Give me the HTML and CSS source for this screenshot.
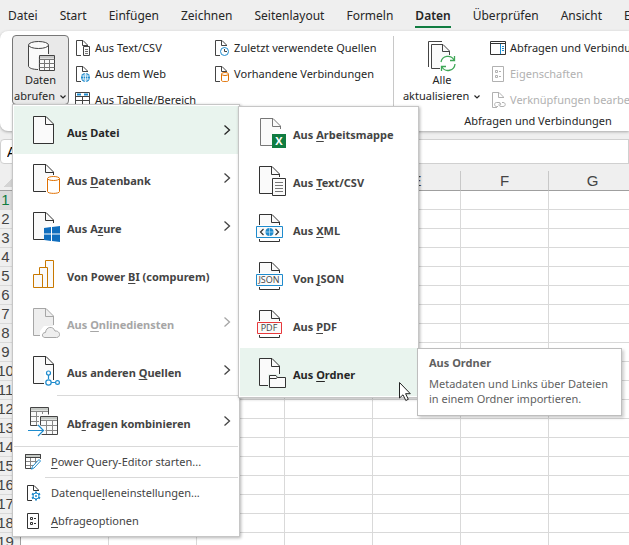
FILE: index.html
```
<!DOCTYPE html>
<html lang="de">
<head>
    <meta charset="UTF-8">
    <meta name="viewport" content="width=device-width, initial-scale=1.0">
    <title>Daten abrufen</title>
    <link rel="stylesheet" href="styles.css">
</head>
<body>
    <!-- shared icon parts -->
    <svg class="defs" aria-hidden="true">
        <symbol id="doc" viewBox="0 0 32 32">
            <path d="M5.5 2.500H18L26 10.500V29.500H5.500Z" fill="#fafafa" stroke="none"/>
            <path d="M25.500 29.500H5.500V2.500H18L25.500 10V29.500M17.500 2.500V10.500H25.500" fill="none" stroke="currentColor"/>
        </symbol>
        <symbol id="doc-cut" viewBox="0 0 32 32">
            <path d="M5.500 2.500H18L25.500 10V14H18V29.500H5.500Z" fill="#fafafa"/>
            <path d="M18 29.500H5.500V2.500H18L25.500 10V13M17.500 2.500V10.500H25.500" fill="none" stroke="currentColor"/>
        </symbol>
        <symbol id="doc-split" viewBox="0 0 32 32">
            <path d="M5.500 13V2.500H18L25.500 10V13Z" fill="#fafafa"/>
            <path d="M5.500 13V2.500H18L25.500 10V13M17.500 2.500V10.500H25.500M5.500 27V29.500H25.500V27" fill="none" stroke="currentColor"/>
        </symbol>
        <symbol id="doc-small" viewBox="0 0 16 16">
            <path d="M6 15.500H1.500V.5H8L12.500 5V6M7.500 .5V5.500H12.500" fill="none" stroke="currentColor"/>
        </symbol>
        <symbol id="props" viewBox="0 0 16 16">
            <path d="M2.500 .5H13.500V15.500H2.500Z" fill="none" stroke="currentColor"/>
            <path d="M5.500 4.500H7.500V6.500H5.500ZM5.500 9.500H7.500V11.500H5.500ZM9 5.500H11M9 10.500H11" fill="none" stroke="currentColor"/>
        </symbol>
        <symbol id="right" viewBox="0 0 8 10">
            <path d="M1.500 .5L6.500 5L1.500 9.500" fill="none" stroke="currentColor" stroke-width="1.300"/>
        </symbol>
        <symbol id="down" viewBox="0 0 8 6">
            <path d="M1.500 1.500L4 4L6.500 1.500" fill="none" stroke="currentColor" stroke-width="1.200"/>
        </symbol>
    </svg>

    <nav class="tabs">
        <a href="#">Datei</a>
        <a href="#">Start</a>
        <a href="#">Einfügen</a>
        <a href="#">Zeichnen</a>
        <a href="#">Seitenlayout</a>
        <a href="#">Formeln</a>
        <a href="#" class="active">Daten</a>
        <a href="#">Überprüfen</a>
        <a href="#">Ansicht</a>
        <a href="#">Entwicklertools</a>
    </nav>

    <div class="ribbon">
        <section class="group import">
            <div class="tools">
                <div class="dropdown">
                    <button class="big open">
                        <svg width="30" height="32" viewBox="0 0 30 32" fill="none" stroke="#444">
                            <path d="M2.500 5V26C2.500 28 7 29.500 12 29.500V17H22.500V5" fill="#fafafa" stroke="none"/>
                            <path d="M12 29.500C7 29.500 2.500 28 2.500 26V5M22.500 5V14"/>
                            <ellipse cx="12.500" cy="5" rx="10" ry="3.500" fill="#fafafa"/>
                            <path d="M13.500 15.500H28.500V30.500H13.500Z" fill="#fafafa"/>
                            <path d="M14 16H28V18.500H14Z" fill="#c8c8c8" stroke="none"/>
                            <path d="M13.500 19.500H28.500M13.500 23.500H28.500M13.500 27.500H28.500M18.500 19V30M23.500 19V30" stroke="#777"/>
                        </svg>
                        <span>Daten</span>
                        <span>abrufen <svg class="caret"><use href="#down"/></svg></span>
                    </button>

                    <ul class="menu main-menu">
                        <li>
                            <button class="item selected">
                                <svg class="icon"><use href="#doc"/></svg>
                                <span>Au<u>s</u> Datei</span>
                                <svg class="arrow"><use href="#right"/></svg>
                            </button>
                            <ul class="menu sub-menu">
                                <li><button class="item">
                                    <svg class="icon" viewBox="0 0 32 32">
                                        <g color="#777"><use href="#doc-cut" x="1" width="32" height="32"/></g>
                                        <path d="M18 18H32V32H18Z" fill="#107c41"/>
                                        <text x="25" y="29" class="icon-text excel">X</text>
                                    </svg>
                                    <span>Aus <u>A</u>rbeitsmappe</span>
                                </button></li>
                                <li><button class="item">
                                    <svg class="icon" viewBox="0 0 32 32">
                                        <use href="#doc-cut" width="32" height="32"/>
                                        <path d="M18.500 14.500H31.500V31.500H18.500Z" fill="#fafafa" stroke="#333"/>
                                        <path d="M21 18.500H29M21 21.500H29M21 24.500H29M21 27.500H29" stroke="#777"/>
                                    </svg>
                                    <span>Aus <u>T</u>ext/CSV</span>
                                </button></li>
                                <li><button class="item">
                                    <svg class="icon" viewBox="0 0 32 32">
                                        <use href="#doc-split" width="32" height="32"/>
                                        <path d="M2.500 14.500H28.500V25.500H2.500Z" fill="#fafafa" stroke="#1e8bcd"/>
                                        <circle cx="15.500" cy="20" r="4" fill="#1e8bcd"/>
                                        <path d="M11.500 20H19.500M15.500 16V24" stroke="#bfe0f5" stroke-width=".7"/>
                                        <path d="M9.500 17L6.500 20L9.500 23M21.500 17L24.500 20L21.500 23" fill="none" stroke="#333" stroke-width="1.200"/>
                                    </svg>
                                    <span>Aus <u>X</u>ML</span>
                                </button></li>
                                <li><button class="item">
                                    <svg class="icon" viewBox="0 0 32 32">
                                        <use href="#doc-split" width="32" height="32"/>
                                        <path d="M2.500 14.500H28.500V25.500H2.500Z" fill="#fafafa" stroke="#1e8bcd"/>
                                        <text x="15" y="23" class="icon-text">JSON</text>
                                    </svg>
                                    <span>Von <u>J</u>SON</span>
                                </button></li>
                                <li><button class="item">
                                    <svg class="icon" viewBox="0 0 32 32">
                                        <use href="#doc-split" width="32" height="32"/>
                                        <path d="M3.500 14.500H27.500V25.500H3.500Z" fill="#fafafa" stroke="#e8383b"/>
                                        <text x="15" y="23" class="icon-text">PDF</text>
                                    </svg>
                                    <span>Aus <u>P</u>DF</span>
                                </button></li>
                                <li>
                                    <button class="item selected" aria-describedby="tip">
                                        <svg class="icon" viewBox="0 0 32 32">
                                            <use href="#doc" width="32" height="32"/>
                                            <path d="M14 18H32V32H14Z" fill="#e9f4ee"/>
                                            <path d="M15.500 31.500V19.500H22L23.500 21.500H31.500V31.500ZM15.500 22.500H22L23.500 21.500" fill="#fafafa" stroke="#333"/>
                                        </svg>
                                        <span>Aus <u>O</u>rdner</span>
                                    </button>
                                    <div class="tooltip" id="tip" role="tooltip">
                                        <strong>Aus Ordner</strong>
                                        <p>Metadaten und Links über Dateien<br>in einem Ordner importieren.</p>
                                    </div>
                                    <svg class="pointer" width="14" height="21" viewBox="0 0 14 21">
                                        <path d="M1.500 1.500V17L5 13.800L7.800 19.500L10.300 18.300L7.600 12.700H12.300Z" fill="#fff" stroke="#222"/>
                                    </svg>
                                </li>
                            </ul>
                        </li>
                        <li><button class="item">
                            <svg class="icon" viewBox="0 0 32 32">
                                <use href="#doc-cut" width="32" height="32"/>
                                <path d="M19.500 16.500V29.500C19.500 32 31.500 32 31.500 29.500V16.500" fill="#fff" stroke="#e07000"/>
                                <ellipse cx="25.500" cy="16.500" rx="6" ry="2" fill="#fff" stroke="#e07000"/>
                            </svg>
                            <span>Aus <u>D</u>atenbank</span>
                            <svg class="arrow"><use href="#right"/></svg>
                        </button></li>
                        <li><button class="item">
                            <svg class="icon" viewBox="0 0 32 32">
                                <use href="#doc-cut" width="32" height="32"/>
                                <path d="M16 18L23 17V23.500H16ZM24 17L32 16V23.500H24ZM16 24.500H23V31L16 30ZM24 24.500H32V32L24 31Z" fill="#106ebe"/>
                            </svg>
                            <span>Aus A<u>z</u>ure</span>
                            <svg class="arrow"><use href="#right"/></svg>
                        </button></li>
                        <li><button class="item">
                            <svg class="icon" viewBox="0 0 32 32" fill="#fafafa" stroke="#c87800">
                                <path d="M17.500 2.500H25.500V29.500H17.500Z"/>
                                <path d="M11.500 9.500H19.500V29.500H11.500Z"/>
                                <path d="M5.500 16.500H14.500V29.500H5.500Z"/>
                            </svg>
                            <span>Von Power <u>B</u>I (compurem)</span>
                        </button></li>
                        <li><button class="item" disabled>
                            <svg class="icon" viewBox="0 0 32 32">
                                <path d="M5.500 2.500H18L25.500 10V29.500H5.500Z" fill="#eee"/>
                                <path d="M14 29.500H5.500V2.500H18L25.500 10V19M17.500 2.500V10.500H25.500" fill="none" stroke="#a6a6a6"/>
                                <path d="M12 32V25L16 20H32V32Z" fill="#fff"/>
                                <path d="M17 31.500C13.500 31.500 13.500 26.500 17.500 26.500C18 20.500 25 19.500 27 25C32.500 24.500 33 31.500 28.500 31.500Z" fill="#eee" stroke="#a6a6a6"/>
                            </svg>
                            <span>Aus <u>O</u>nlinediensten</span>
                            <svg class="arrow"><use href="#right"/></svg>
                        </button></li>
                        <li><button class="item">
                            <svg class="icon" viewBox="0 0 32 32">
                                <use href="#doc" width="32" height="32"/>
                                <path d="M17 16H25V18H32V32H16V18Z" fill="#fff"/>
                                <path d="M25.500 10V26" stroke="#333"/>
                                <g fill="#fff" stroke="#1e8bcd" stroke-width="1.200">
                                    <path d="M20.500 21V25M23 28.500H27"/>
                                    <circle cx="20.500" cy="19" r="2"/>
                                    <circle cx="20.500" cy="28.500" r="2.700"/>
                                    <circle cx="29.500" cy="28.500" r="1.900"/>
                                </g>
                            </svg>
                            <span>Aus anderen <u>Q</u>uellen</span>
                            <svg class="arrow"><use href="#right"/></svg>
                        </button></li>
                        <li class="line indent-big"></li>
                        <li><button class="item">
                            <svg class="icon" viewBox="0 0 32 32" fill="none" stroke="#444">
                                <path d="M2.500 2.500H20.500V20.500H2.500Z" fill="#fafafa" stroke="none"/>
                                <path d="M3 3H20V5.500H3Z" fill="#c5c9c5" stroke="none"/>
                                <path d="M2.500 6.500H20.500M2.500 11.500H11M2.500 16.500H11M8.500 6V20M14.500 6V9" stroke="#888"/>
                                <path d="M11 20.500H2.500V2.500H20.500V9.500"/>
                                <path d="M12.500 11.500H29.500V29.500H12.500Z" fill="#fafafa"/>
                                <path d="M13 12H29V14.500H13Z" fill="#c5c9c5" stroke="none"/>
                                <path d="M13 15.500H29M13 20.500H29M13 25.500H29M18.500 15V29M24.500 15V29" stroke="#888"/>
                                <path d="M0 25.500H15M10 20L15.500 25.500L10 31" stroke="#fff" stroke-width="3"/>
                                <path d="M0 25.500H15M10 20L15.500 25.500L10 31" stroke="#1e8bcd" stroke-width="1.200"/>
                            </svg>
                            <span>Ab<u>f</u>ragen kombinieren</span>
                            <svg class="arrow"><use href="#right"/></svg>
                        </button></li>
                        <li class="line"></li>
                        <li><button class="item small">
                            <svg class="icon" viewBox="0 0 16 16" fill="none" stroke="#444">
                                <path d="M.5 .5H15.500V3.500H.5Z" fill="#c5c9c5"/>
                                <path d="M1 7.500H12M1 11.500H8M5.500 4V14M10.500 4V9" stroke="#888"/>
                                <path d="M7 14.500H.5V.5H15.500V5"/>
                                <path d="M14 5.500L15.500 7L9 14L6.500 15.200L7.500 12.500Z" fill="#fff" stroke="#1e8bcd"/>
                            </svg>
                            <span><u>P</u>ower Query-Editor starten...</span>
                        </button></li>
                        <li class="line indent-small"></li>
                        <li><button class="item small">
                            <svg class="icon" viewBox="0 0 16 16">
                                <use href="#doc-small" x="1" width="16" height="16"/>
                                <path d="M11 6.500V15.500M7 8.700L15 13.300M15 8.700L7 13.300" stroke="#1e8bcd" stroke-width="2"/>
                                <circle cx="11" cy="11" r="3" fill="#fff" stroke="#1e8bcd"/>
                                <circle cx="11" cy="11" r="1" fill="#1e8bcd"/>
                            </svg>
                            <span>Datenque<u>l</u>leneinstellungen...</span>
                        </button></li>
                        <li><button class="item small">
                            <svg class="icon"><use href="#props"/></svg>
                            <span><u>A</u>bfrageoptionen</span>
                        </button></li>
                    </ul>
                </div>

                <div class="stack">
                    <button class="tool">
                        <svg class="small-icon" viewBox="0 0 16 16">
                            <use href="#doc-small" width="16" height="16"/>
                            <path d="M8.500 6.500H14.500V15.500H8.500Z" fill="#fafafa" stroke="#444"/>
                            <path d="M10 9.500H13M10 11.500H13M10 13.500H13" stroke="#777"/>
                        </svg>
                        Aus Text/CSV
                    </button>
                    <button class="tool">
                        <svg class="small-icon" viewBox="0 0 16 16">
                            <use href="#doc-small" width="16" height="16"/>
                            <circle cx="10.500" cy="11.500" r="4.500" fill="#1e8bcd"/>
                            <path d="M6.500 10H14.500M6.500 13H14.500M10.500 7V16" stroke="#fff" stroke-width=".8"/>
                            <ellipse cx="10.500" cy="11.500" rx="2" ry="4" fill="none" stroke="#fff" stroke-width=".7"/>
                        </svg>
                        Aus dem Web
                    </button>
                    <button class="tool">
                        <svg class="small-icon" viewBox="0 0 16 16" fill="none" stroke="#444">
                            <path d="M.5 .5H14.500V15.500H.5ZM.5 4.500H14.500M.5 8.500H14.500M.5 12.500H14.500M7.500 4V15"/>
                            <path d="M2 2.500H6M9 2.500H13" stroke="#1e8bcd" stroke-width="2"/>
                        </svg>
                        Aus Tabelle/Bereich
                    </button>
                </div>

                <div class="stack">
                    <button class="tool">
                        <svg class="small-icon" viewBox="0 0 16 16">
                            <use href="#doc-small" width="16" height="16"/>
                            <circle cx="10.500" cy="11.500" r="4" fill="#fff" stroke="#1e8bcd"/>
                            <path d="M10.500 9V11.500H13" fill="none" stroke="#444"/>
                        </svg>
                        Zuletzt verwendete Quellen
                    </button>
                    <button class="tool">
                        <svg class="small-icon" viewBox="0 0 16 16">
                            <use href="#doc-small" width="16" height="16"/>
                            <path d="M7.500 8V14.500C7.500 16 14.500 16 14.500 14.500V8" fill="#fff" stroke="#e07000"/>
                            <ellipse cx="11" cy="8" rx="3.500" ry="1.500" fill="#fff" stroke="#e07000"/>
                        </svg>
                        Vorhandene Verbindungen
                    </button>
                </div>
            </div>
        </section>

        <section class="group queries">
            <div class="tools">
                <button class="big">
                    <svg width="30" height="32" viewBox="0 0 30 32" fill="none" stroke="#444">
                        <path d="M1.500 27V1.500H15"/>
                        <path d="M13 28.500H4.500V4.500H16L22.500 11V17H13Z" fill="#fafafa" stroke="none"/>
                        <path d="M13 28.500H4.500V4.500H16L22.500 11V15M15.500 4.500V11.500H22.500"/>
                        <path d="M14 22A7 7 0 0 1 27 20M28 24A7 7 0 0 1 15 27" stroke="#3fa757" stroke-width="1.300"/>
                        <path d="M27.500 16V20.500H23M14.500 31V26.500H19" stroke="#3fa757" stroke-width="1.300"/>
                    </svg>
                    <span>Alle</span>
                    <span>aktualisieren <svg class="caret"><use href="#down"/></svg></span>
                </button>
                <div class="stack">
                    <button class="tool">
                        <svg class="small-icon" viewBox="0 0 16 16" fill="none" stroke="#333">
                            <path d="M.5 1.500H15.500V14.500H.5ZM.5 3.500H15.500"/>
                            <path d="M10.500 4V14M12 6.500H14M12 8.500H14M12 10.500H14" stroke="#1e8bcd"/>
                        </svg>
                        Abfragen und Verbindungen
                    </button>
                    <button class="tool" disabled>
                        <svg class="small-icon"><use href="#props"/></svg>
                        Eigenschaften
                    </button>
                    <button class="tool" disabled>
                        <svg class="small-icon" viewBox="0 0 16 16">
                            <use href="#doc-small" x="1" width="16" height="16"/>
                            <path d="M8 14.500H6.500C4 14.500 4 10.500 6.500 10.500H9C11 10.500 11 13 10 13.500M12 10.500H13C16 10.500 16 14.500 13 14.500H11C9 14.500 8.500 12.500 9.500 11.500" fill="none" stroke="currentColor"/>
                        </svg>
                        Verknüpfungen bearbeiten
                    </button>
                </div>
            </div>
            <div class="group-name">Abfragen und Verbindungen</div>
        </section>
    </div>

    <div class="formula-bar">
        <input class="name-box" type="text" value="A1" aria-label="Namenfeld">
        <input class="formula" type="text" aria-label="Bearbeitungsleiste">
    </div>

    <table class="sheet">
        <thead>
            <tr><th class="corner"></th><th>A</th><th>B</th><th>C</th><th>D</th><th>E</th><th>F</th><th>G</th></tr>
        </thead>
        <tbody id="rows"></tbody>
    </table>

    <script>
        const rows = document.getElementById("rows");
        for (let i = 1; i <= 19; i++) {
            const tr = rows.insertRow();
            tr.innerHTML = "<th>" + i + "</th>" + "<td></td>".repeat(7);
            if (i === 1) tr.className = "current";
        }
    </script>
</body>
</html>
```
FILE: styles.css
```
* {
    box-sizing: border-box;
}
body {
    margin: 0;
    height: 100vh;
    overflow: hidden;
    background: #efefef;
    color: #262626;
    font-family: "Noto Sans", "Open Sans", sans-serif;
    font-size: 11px;
    line-height: 16px;
}
button {
    padding: 0;
    border: none;
    background: none;
    color: inherit;
    font: inherit;
    white-space: nowrap;
}
.defs {
    display: none;
}

/* tabs */
.tabs {
    display: flex;
    gap: 22px;
    height: 31px;
    padding: 6px 8px 0;
    overflow: hidden;
    font-size: 12px;
    line-height: 20px;
}
.tabs a {
    height: 22px;
    color: #262626;
    text-decoration: none;
}
.tabs .active {
    font-weight: 600;
    border-bottom: 2px solid #107c41;
}

/* ribbon */
.ribbon {
    display: flex;
    height: 100px;
    border-radius: 8px 0 0 8px;
    background: #fff;
    box-shadow: 0 1px 3px rgba(0, 0, 0, 0.3);
}
.group {
    flex: none;
    padding-top: 4px;
}
.import {
    width: 394px;
    padding-left: 12px;
}
.queries {
    position: relative;
    width: 282px;
    padding-left: 6px;
}
.queries::before {
    content: "";
    position: absolute;
    left: -1px;
    top: 5px;
    bottom: 6px;
    border-left: 1px solid #c8c8c8;
}
.tools {
    display: flex;
}
.dropdown {
    position: relative;
}
.big {
    display: flex;
    flex-direction: column;
    align-items: center;
    width: 84px;
    height: 70px;
    padding-top: 5px;
}
.big span {
    display: block;
}
.big.open {
    width: 57px;
    padding-top: 4px;
    border: 1px solid #777;
    border-radius: 4px;
    background: #e9e9e9;
}
.caret {
    width: 8px;
    height: 6px;
    margin-left: 1px;
}
.stack {
    margin: 0 12px 0 6px;
}
.tool {
    display: flex;
    align-items: center;
    gap: 4px;
    height: 26px;
}
.small-icon {
    width: 16px;
    height: 16px;
    color: #444;
}
.tool:disabled, .tool:disabled .small-icon {
    color: #b1b1b1;
}
.group-name {
    text-align: center;
}

/* menus */
.menu {
    position: absolute;
    z-index: 2;
    margin: 0;
    padding: 1px;
    list-style: none;
    border: 1px solid #c6c6c6;
    background: #fff;
    box-shadow: 1px 1px 3px rgba(0, 0, 0, 0.3);
}
.main-menu {
    left: 0;
    top: 69px;
    width: 228px;
}
.sub-menu {
    left: 225px;
    top: 1px;
    width: 181px;
}
.item {
    display: flex;
    align-items: center;
    gap: 7px;
    width: 100%;
    height: 48px;
    padding: 6px 7px 0 14px;
    color: #444;
    font-weight: 700;
    text-align: left;
}
.item .icon {
    width: 32px;
    height: 32px;
    margin-top: -6px;
    color: #333;
}
.item.selected {
    background: #e9f4ee;
    color: #262626;
}
.item:disabled, .item:disabled .icon {
    color: #a6a6a6;
}
.item u {
    text-underline-offset: 2px;
}
.arrow {
    width: 8px;
    height: 10px;
    margin: -6px 0 0 auto;
}
.item.small {
    height: 28px;
    padding: 0 11px;
    gap: 10px;
    font-weight: 400;
}
.item.small .icon {
    width: 16px;
    height: 16px;
    margin: 0;
}
.line {
    height: 1px;
    margin: 1px 0;
    background: #d9d9d9;
}
.indent-big {
    margin-left: 43px;
}
.indent-small {
    margin-left: 31px;
}
.icon-text {
    fill: #444;
    font: 9px "Open Sans", sans-serif;
    text-anchor: middle;
}
.excel {
    fill: #fff;
    font-size: 11px;
    font-weight: 700;
}
.tooltip {
    position: absolute;
    left: 178px;
    top: 241px;
    width: 205px;
    padding: 6px 11px 9px;
    border: 1px solid #bebebe;
    background: #fff;
    color: #5f5f5f;
    line-height: 15px;
    white-space: nowrap;
    box-shadow: 2px 2px 3px rgba(0, 0, 0, 0.2);
}
.tooltip p {
    margin: 6px 0 0;
}
.pointer {
    position: absolute;
    left: 159px;
    top: 274px;
}

/* sheet */
.formula-bar {
    display: flex;
    gap: 8px;
    height: 25px;
    margin: 8px 0 7px;
}
.formula-bar input {
    border: 1px solid #d0d0d0;
    background: #fff;
    font: 14px "Liberation Sans", sans-serif;
}
.name-box {
    width: 100px;
    padding: 0 6px;
    border-radius: 4px;
}
.formula {
    flex: 1;
    border-right: none;
}
.sheet {
    table-layout: fixed;
    width: 646px;
    margin-left: -9px;
    border-collapse: separate;
    border-spacing: 0;
    background: #fff;
    color: #444;
    font: 15px "Liberation Sans", sans-serif;
}
.sheet th, .sheet td {
    height: 19px;
    padding: 0;
    border-right: 1px solid #d9d9d9;
    border-bottom: 1px solid #d9d9d9;
    font-weight: 400;
    line-height: 18px;
}
.sheet th {
    background: #efefef;
}
.sheet thead th {
    width: 88px;
    height: 20px;
    border-right-color: #c8c8c8;
    border-bottom-color: #9f9f9f;
}
.sheet thead .corner {
    width: 30px;
    background: linear-gradient(135deg, #efefef 50%, #d4d4d4 50%) no-repeat right 7px bottom 3px / 10px 10px #efefef;
}
.sheet tbody th {
    border-right-color: #9f9f9f;
}
.sheet .current th {
    background: #dadada;
    color: #107c41;
}
```
